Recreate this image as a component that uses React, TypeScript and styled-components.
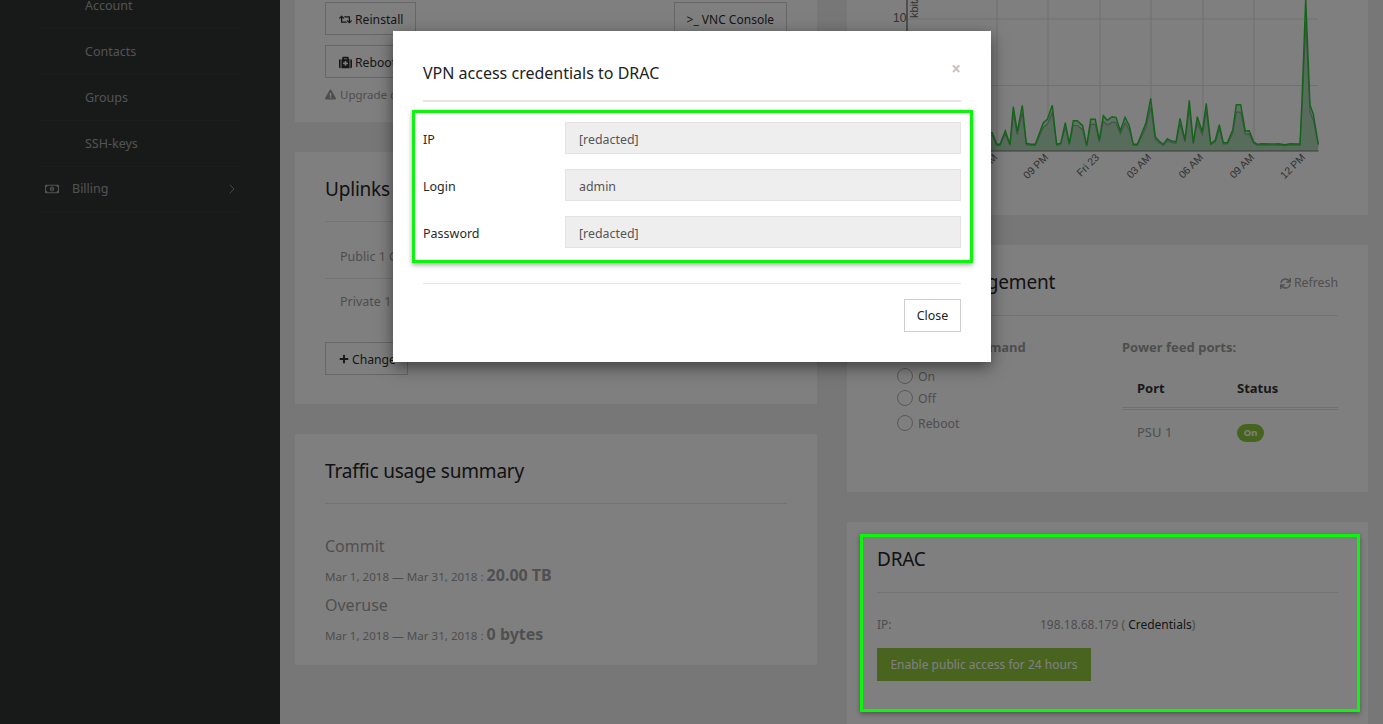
import React from "react";
import styled, { createGlobalStyle } from "styled-components";
import { FaRetweet, FaMedkit, FaExclamationTriangle, FaPlus, FaSync, FaRegMoneyBillAlt } from "react-icons/fa";
import { FiChevronRight } from "react-icons/fi";

const Global = createGlobalStyle`
  html, body { margin: 0; padding: 0; height: 724px; overflow: hidden; background: #eeeeee; }
  body { font-family: "Noto Sans", "Open Sans", sans-serif; font-size: 13px; color: #9c9c9c; }
  * { box-sizing: border-box; }
`;

const Page = styled.div`
  display: flex;
  width: 1383px;
  height: 724px;
  overflow: hidden;
  position: relative;
`;
const Sidebar = styled.nav`
  width: 280px;
  flex: none;
  background: #303434;
  padding: 0 40px;
`;
const SideList = styled.div`
  margin-top: -17px;
  display: flex;
  flex-direction: column;
`;
const SideItem = styled.a<{ $sub?: boolean }>`
  display: flex;
  align-items: center;
  height: 46px;
  padding-left: ${(p) => (p.$sub ? "45px" : "5px")};
  padding-right: 5px;
  padding-bottom: ${(p) => (p.$sub ? "0" : "2px")};
  border-bottom: 1px solid #363a3a;
  color: #a4a6a6;
  font-size: 12.5px;
  svg.money { width: 14px; height: 14px; margin-right: 13px; }
  svg.chev { width: 16px; height: 16px; margin-left: auto; margin-right: -5px; stroke-width: 1.5; color: #8c8e8e; }
`;
const Main = styled.main`
  flex: 1;
  display: grid;
  grid-template-columns: 522px 521px;
  gap: 30px;
  padding: 0 15px;
  align-items: start;
`;
const Column = styled.div<{ $offset: number }>`
  display: flex;
  flex-direction: column;
  gap: 30px;
  margin-top: ${(p) => p.$offset}px;
`;
const Card = styled.section<{ $h: number }>`
  height: ${(p) => p.$h}px;
  background: #ffffff;
  padding: 0 30px;
  overflow: hidden;
  flex: none;
`;
const CardTitle = styled.h3`
  margin: 0;
  font-size: 19px;
  font-weight: 400;
  line-height: 28px;
  color: #262626;
  letter-spacing: -0.2px;
  padding-top: 23px;
`;
const TitleBar = styled.div<{ $pb?: number }>`
  display: flex;
  justify-content: space-between;
  align-items: flex-end;
  padding-bottom: ${(p) => p.$pb ?? 18}px;
  border-bottom: 1px solid #e6e6e6;
`;
const Btn = styled.button<{ $tight?: boolean }>`
  display: inline-flex;
  align-items: center;
  justify-content: center;
  gap: 3px;
  height: 33px;
  padding: 1px ${(p) => (p.$tight ? "11px" : "13px")} 0 13px;
  background: #fff;
  border: 1px solid #cfcfcf;
  color: #2e2e2e;
  font: inherit;
  font-size: 12.2px;
  svg { width: 13px; height: 13px; flex: none; }
`;
const VncBtn = styled(Btn)`
  padding: 1px 12px 0;
  font-size: 12px;
`;
const PlusIcon = styled(FaPlus)`
  && { width: 10px; height: 10px; }
`;
const BtnRow = styled.div`
  display: flex;
  justify-content: space-between;
  margin-top: 2px;
`;
const RebootRow = styled.div`
  margin-top: 10px;
`;
const TopSpacer = styled.div`
  height: 88px;
`;
const Warn = styled.div`
  display: flex;
  align-items: center;
  gap: 4px;
  margin-top: 9px;
  color: #9c9c9c;
  font-size: 11.5px;
  svg { width: 11px; height: 11px; }
`;
const UplinkRow = styled.div<{ $last?: boolean }>`
  height: 45px;
  padding-left: 15px;
  padding-top: 14px;
  border-bottom: ${(p) => (p.$last ? "none" : "1px solid #e6e6e6")};
  color: #9c9c9c;
  font-size: 12.5px;
`;
const UplinkList = styled.div`
  margin-top: 12px;
  margin-bottom: 18px;
`;
const Metric = styled.div`
  font-size: 16px;
  color: #a0a0a0;
  line-height: 24px;
`;
const Period = styled.div`
  font-size: 11.6px;
  color: #9c9c9c;
  line-height: 24px;
  margin: 5px 0 4px;
  b { font-size: 16px; font-weight: 700; color: #a0a0a0; }
`;
const Summary = styled.div`
  margin-top: 30px;
`;
const ChartBox = styled.div`
  margin: 0 -30px;
  svg { display: block; }
`;
const RefreshLink = styled.span`
  display: inline-flex;
  align-items: center;
  gap: 3px;
  color: #a0a0a0;
  font-size: 12.3px;
  line-height: 28px;
  margin-bottom: -1px;
  svg { width: 11px; height: 11px; }
`;
const PowerGrid = styled.div`
  display: grid;
  grid-template-columns: 245px 216px;
  margin-top: 22px;
`;
const PowerHead = styled.div`
  font-weight: 700;
  font-size: 13px;
  color: #9c9c9c;
  line-height: 18px;
`;
const CommandHead = styled(PowerHead)`
  padding-left: 5px;
`;
const Radio = styled.label`
  display: flex;
  align-items: center;
  gap: 5px;
  height: 22px;
  color: #9c9c9c;
  font-size: 12.3px;
  &:last-child { margin-top: 3px; }
  &::before {
    content: "";
    width: 14px;
    height: 14px;
    border: 1px solid #b0b0b0;
    border-radius: 50%;
    background: #fff;
    flex: none;
  }
`;
const RadioList = styled.div`
  margin-top: 9px;
  padding-left: 20px;
`;
const PortTable = styled.div`
  margin-top: 14px;
`;
const PortHead = styled.div`
  display: grid;
  grid-template-columns: 100px 1fr;
  padding: 0 15px 1px;
  height: 40px;
  align-items: center;
  font-weight: 700;
  color: #333;
  font-size: 13px;
  border-bottom: 3px double #e0e0e0;
`;
const PortRow = styled.div`
  display: grid;
  grid-template-columns: 100px 1fr;
  padding: 0 15px;
  height: 43px;
  align-items: center;
  color: #9c9c9c;
  font-size: 13px;
`;
const Badge = styled.span`
  display: inline-flex;
  align-items: center;
  justify-content: center;
  width: 27px;
  height: 18px;
  margin-top: 2px;
  border-radius: 9px;
  background: #8cc63f;
  color: #fff;
  font-size: 9.5px;
  font-weight: 700;
  vertical-align: middle;
`;
const DracRow = styled.div`
  display: grid;
  grid-template-columns: 163px 1fr;
  margin-top: 23px;
  line-height: 18px;
  font-size: 12px;
  a { color: #2e2e2e; }
`;
const PrimaryBtn = styled.button`
  display: block;
  margin-top: 14px;
  width: 214px;
  height: 33px;
  border: 0;
  background: #92c83e;
  color: #fff;
  font: inherit;
  font-size: 12px;
`;

const Overlay = styled.div`
  position: absolute;
  inset: 0;
  background: rgba(0, 0, 0, 0.5);
  display: flex;
  justify-content: center;
  align-items: flex-start;
  padding: 31px 0 0 1px;
`;
const Modal = styled.div`
  width: 598px;
  height: 331px;
  background: #fff;
  padding: 0 30px;
  box-shadow: 0 5px 15px rgba(0, 0, 0, 0.5);
`;
const ModalHead = styled.div`
  display: flex;
  justify-content: space-between;
  height: 71px;
  padding-top: 30px;
  border-bottom: 2px solid #e5e5e5;
`;
const ModalTitle = styled.h4`
  margin: 0;
  font-size: 16px;
  line-height: 24px;
  font-weight: 400;
  color: #222;
`;
const CloseX = styled.span`
  color: #c4c4c4;
  font-size: 17px;
  font-weight: 700;
  line-height: 16px;
`;
const Marked = styled.div`
  margin: 8px -12px 0 -11px;
  height: 153px;
  border: 3px solid #0cf50c;
  box-shadow: 0 2px 5px rgba(0, 0, 0, 0.35);
  padding: 9px 9px 0 8px;
  display: flex;
  flex-direction: column;
  gap: 15px;
`;
const FormRow = styled.div`
  display: grid;
  grid-template-columns: 142px 396px;
  align-items: center;
  color: #2a2a2a;
  font-size: 12.5px;
  span { padding-top: 2px; }
`;
const Field = styled.div`
  height: 32px;
  background: #eeeeee;
  border: 1px solid #e3e3e3;
  padding: 2px 13px 0;
  display: flex;
  align-items: center;
  color: #555;
  font-size: 12.4px;
`;
const ModalFoot = styled.div`
  margin-top: 20px;
  border-top: 1px solid #e5e5e5;
  padding-top: 15px;
  display: flex;
  justify-content: flex-end;
`;
const CloseBtn = styled(Btn)`
  width: 57px;
  padding: 0;
  color: #222;
  font-size: 12.4px;
`;
const DracMark = styled.div`
  position: absolute;
  left: 860px;
  top: 534px;
  width: 500px;
  height: 178px;
  border: 3px solid #0cf50c;
  box-shadow: 0 2px 5px rgba(0, 0, 0, 0.35);
`;

const raw = [[93,398],[97,398],[110,433],[120,433],[136,392],[150,433],[160,320],[172,395],[187,316],[199,430],[213,433],[226,433],[250,368],[262,358],[277,316],[290,433],[302,430],[316,368],[328,430],[340,362],[352,362],[368,377],[380,436],[392,358],[406,358],[418,420],[430,347],[442,361],[456,350],[468,352],[481,392],[495,352],[508,377],[520,433],[532,433],[558,368],[572,295],[586,410],[598,424],[610,433],[622,416],[635,423],[648,425],[660,355],[675,420],[688,301],[700,428],[712,350],[727,395],[739,310],[752,431],[766,420],[778,374],[790,428],[802,428],[818,390],[829,314],[842,314],[856,393],[868,392],[881,426],[893,433],[905,431],[945,432],[955,431],[975,434],[990,431],[1020,432],[1026,300],[1037,-6],[1050,315],[1060,342],[1075,432]];
const chartX = (x: number) => x / 3 + 960 - 847;
const top = raw.map(([x, y]) => `${chartX(x).toFixed(1)},${(y / 3).toFixed(1)}`).join(" ");
const lower = raw.map(([x, y]) => `${chartX(x).toFixed(1)},${(151 - (151 - y / 3) * 0.84).toFixed(1)}`).join(" ");
const gridX = [997, 1048, 1100, 1151, 1203, 1254].map((v) => v - 847);
const labels = [[1047, "09 PM"], [1098, "Fri 23"], [1150, "03 AM"], [1202, "06 AM"], [1253, "09 AM"], [1304, "12 PM"], [996, "06 PM"]] as const;

const Chart = () => (
  <svg width="521" height="190" viewBox="0 0 521 190">
    {gridX.map((x) => (<line key={x} x1={x} x2={x} y1={0} y2={151} stroke="#ddd" strokeWidth="1" />))}
    <line x1={60} x2={471} y1={19} y2={19} stroke="#e2e2e2" />
    <line x1={60} x2={471} y1={85.5} y2={85.5} stroke="#e2e2e2" />
    <polygon points={`${chartX(93)},151 ${top} 471,151`} fill="#b5e3bd" fillOpacity="0.9" />
    <polygon points={`${chartX(93)},151 ${lower} 471,151`} fill="#a8cfb2" fillOpacity="0.6" />
    <polyline points={lower} fill="none" stroke="#86a893" strokeWidth="1.2" />
    <polyline points={top} fill="none" stroke="#27c832" strokeWidth="1.4" />
    <line x1={60} x2={471.5} y1={151} y2={151} stroke="#777" strokeWidth="1.2" />
    <line x1={60} x2={60} y1={0} y2={151} stroke="#888" strokeWidth="1.6" />
    <text x={46} y={22} fontSize="12" fontFamily="Liberation Sans" fill="#666">10</text>
    <text transform="translate(71,18) rotate(-90)" fontSize="11" fontFamily="Liberation Sans" fill="#666">kbit/</text>
    {labels.map(([x, t]) => (
      <text key={t} transform={`translate(${x - 847 + 2},${158}) rotate(-45)`} textAnchor="end" fontSize="10.5" fontFamily="Liberation Sans" fill="#666">{t}</text>
    ))}
  </svg>
);

export default function App() {
  return (
    <>
      <Global />
      <Page>
        <Sidebar>
          <SideList>
            <SideItem $sub>Account</SideItem>
            <SideItem $sub>Contacts</SideItem>
            <SideItem $sub>Groups</SideItem>
            <SideItem $sub>SSH-keys</SideItem>
            <SideItem><FaRegMoneyBillAlt className="money" />Billing<FiChevronRight className="chev" /></SideItem>
          </SideList>
        </Sidebar>
        <Main>
          <Column $offset={-88}>
            <Card $h={210}>
              <TopSpacer />
              <BtnRow>
                <Btn $tight><FaRetweet />Reinstall</Btn>
                <VncBtn>&gt;_ VNC Console</VncBtn>
              </BtnRow>
              <RebootRow><Btn><FaMedkit />Reboot</Btn></RebootRow>
              <Warn><FaExclamationTriangle />Upgrade configuration</Warn>
            </Card>
            <Card $h={252}>
              <TitleBar><CardTitle>Uplinks</CardTitle></TitleBar>
              <UplinkList>
                <UplinkRow>Public 1 Gbit/s</UplinkRow>
                <UplinkRow $last>Private 1 Gbit/s</UplinkRow>
              </UplinkList>
              <Btn $tight><PlusIcon />Change</Btn>
            </Card>
            <Card $h={231}>
              <TitleBar><CardTitle>Traffic usage summary</CardTitle></TitleBar>
              <Summary>
                <Metric>Commit</Metric>
                <Period>Mar 1, 2018 — Mar 31, 2018 : <b>20.00 TB</b></Period>
                <Metric>Overuse</Metric>
                <Period>Mar 1, 2018 — Mar 31, 2018 : <b>0 bytes</b></Period>
              </Summary>
            </Card>
          </Column>
          <Column $offset={0}>
            <Card $h={215}>
              <ChartBox><Chart /></ChartBox>
            </Card>
            <Card $h={247}>
              <TitleBar $pb={19}>
                <CardTitle>Power management</CardTitle>
                <RefreshLink><FaSync />Refresh</RefreshLink>
              </TitleBar>
              <PowerGrid>
                <div>
                  <CommandHead>Send power command</CommandHead>
                  <RadioList>
                    <Radio>On</Radio>
                    <Radio>Off</Radio>
                    <Radio>Reboot</Radio>
                  </RadioList>
                </div>
                <div>
                  <PowerHead>Power feed ports:</PowerHead>
                  <PortTable>
                    <PortHead><span>Port</span><span>Status</span></PortHead>
                    <PortRow><span>PSU 1</span><span><Badge>On</Badge></span></PortRow>
                  </PortTable>
                </div>
              </PowerGrid>
            </Card>
            <Card $h={202}>
              <TitleBar $pb={19}><CardTitle>DRAC</CardTitle></TitleBar>
              <DracRow><span>IP:</span><span>198.18.68.179 ( <a>Credentials</a>)</span></DracRow>
              <PrimaryBtn>Enable public access for 24 hours</PrimaryBtn>
            </Card>
          </Column>
        </Main>
        <Overlay>
          <Modal>
            <ModalHead>
              <ModalTitle>VPN access credentials to DRAC</ModalTitle>
              <CloseX>×</CloseX>
            </ModalHead>
            <Marked>
              <FormRow><span>IP</span><Field>[redacted]</Field></FormRow>
              <FormRow><span>Login</span><Field>admin</Field></FormRow>
              <FormRow><span>Password</span><Field>[redacted]</Field></FormRow>
            </Marked>
            <ModalFoot><CloseBtn>Close</CloseBtn></ModalFoot>
          </Modal>
          <DracMark />
        </Overlay>
      </Page>
    </>
  );
}
